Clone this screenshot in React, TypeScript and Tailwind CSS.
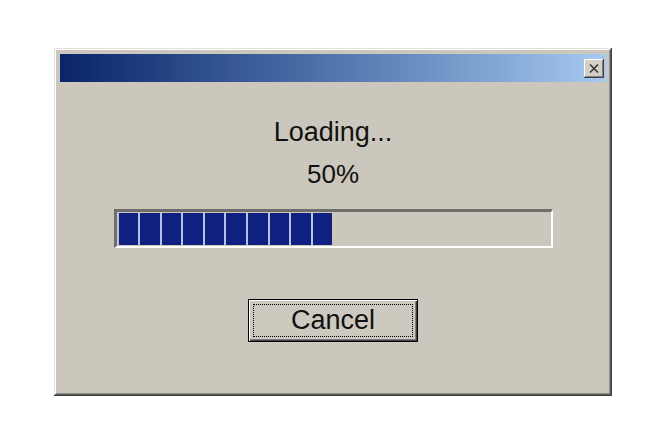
import React from "react";

export default function App() {
  const blocks = Array.from({ length: 10 });
  return (
    <div className="w-[668px] h-[445px] bg-white pt-[48px] pl-[54px]" style={{ fontFamily: '"Liberation Sans", Arial, sans-serif' }}>
      <div className="w-[558px] h-[348px] bg-[#cbc7bd] p-[6px] flex flex-col shadow-[inset_-1px_-1px_#3c3c3a,inset_1px_1px_#e4e0d8,inset_-2px_-2px_#5e5e5a,inset_2px_2px_#ffffff,inset_-3px_-3px_#8a8a84]">
        <div className="h-[28px] bg-gradient-to-r from-[#0a246a] to-[#a6caf0] flex items-center justify-end pr-[2px]">
          <div className="w-[20px] h-[19px] bg-[#d4d0c8] flex items-center justify-center shadow-[inset_-1px_-1px_#404040,inset_1px_1px_#ffffff,inset_-2px_-2px_#808080]">
            <svg width="10" height="9" viewBox="0 0 10 9">
              <path d="M1 0.5 L9 8.5 M9 0.5 L1 8.5" stroke="#3a3a3a" strokeWidth="1.6" />
            </svg>
          </div>
        </div>
        <div className="flex flex-col items-center">
          <div className="mt-[35px] text-[27px] leading-[30px] text-[#111]">Loading...</div>
          <div className="mt-[12px] text-[26px] leading-[30px] text-[#111]">50%</div>
          <div className="mt-[20px] w-[439px] h-[39px] border-t-[3px] border-l-[3px] border-b-[2px] border-r-[2px] border-t-[#6e6e6a] border-l-[#6e6e6a] border-b-white border-r-white p-[1px] flex">
            <div className="flex gap-[2px] bg-[#b8c0e4] pl-[1px] h-full">
              {blocks.map((_, i) => (
                <div key={i} className="w-[19.6px] h-full bg-[#0f2080]" />
              ))}
            </div>
          </div>
          <div className="mt-[51px] w-[170px] h-[43px] border border-black bg-[#cdc9bf] shadow-[inset_1px_1px_#ffffff,inset_-1px_-1px_#404040,inset_-2px_-2px_#808080] p-[4px]">
            <div className="w-full h-full border border-dotted border-black flex items-center justify-center text-[27px] leading-none text-[#111]">
              Cancel
            </div>
          </div>
        </div>
      </div>
    </div>
  );
}
